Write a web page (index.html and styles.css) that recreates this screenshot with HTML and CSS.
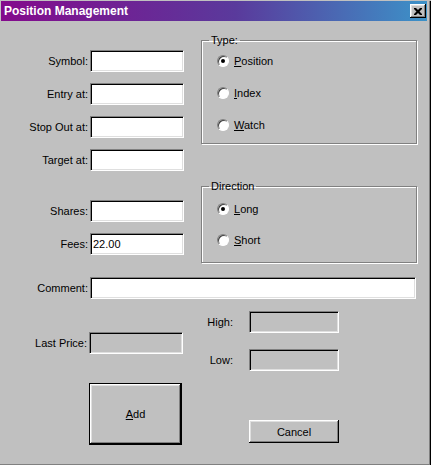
FILE: index.html
```html
<!DOCTYPE html>
<html lang="en">
<head>
    <meta charset="UTF-8">
    <meta name="viewport" content="width=device-width, initial-scale=1.0">
    <title>Position Management</title>
    <link rel="stylesheet" href="styles.css">
</head>
<body>
<div class="window">
    <!-- Title bar -->
    <div class="titlebar">
        <span class="title">Position Management</span>
        <button class="close-btn" aria-label="Close">
            <svg width="8" height="7" viewBox="0 0 8 7">
                <path d="M0 0h2l2 2 2-2h2v1L5.5 3.5 8 6v1H6L4 5 2 7H0V6l2.5-2.5L0 1z" fill="#000"/>
            </svg>
        </button>
    </div>

    <!-- Fields and option groups -->
    <div class="top-section">
        <div class="field-column">
            <div class="field-row"><label>Symbol:</label><input class="text-input" type="text"></div>
            <div class="field-row"><label>Entry at:</label><input class="text-input" type="text"></div>
            <div class="field-row"><label>Stop Out at:</label><input class="text-input" type="text"></div>
            <div class="field-row"><label>Target at:</label><input class="text-input" type="text"></div>
            <div class="field-row spaced"><label>Shares:</label><input class="text-input" type="text"></div>
            <div class="field-row"><label>Fees:</label><input class="text-input" type="text" value="22.00"></div>
        </div>

        <div class="group-column">
            <fieldset class="group type-group">
                <legend>Type:</legend>
                <div class="radio-list">
                    <div class="radio-row"><span class="radio checked"></span><span><u>P</u>osition</span></div>
                    <div class="radio-row"><span class="radio"></span><span><u>I</u>ndex</span></div>
                    <div class="radio-row"><span class="radio"></span><span><u>W</u>atch</span></div>
                </div>
            </fieldset>

            <fieldset class="group direction-group">
                <legend>Direction</legend>
                <div class="radio-list">
                    <div class="radio-row"><span class="radio checked"></span><span><u>L</u>ong</span></div>
                    <div class="radio-row"><span class="radio"></span><span><u>S</u>hort</span></div>
                </div>
            </fieldset>
        </div>
    </div>

    <!-- Comment -->
    <div class="comment-row">
        <label>Comment:</label>
        <input class="text-input comment-input" type="text">
    </div>

    <!-- Prices and buttons -->
    <div class="bottom-section">
        <div class="price-column">
            <div class="field-row last-price"><label>Last Price:</label><input class="text-input" type="text" disabled></div>
            <button class="btn btn-default add-btn"><u>A</u>dd</button>
        </div>
        <div class="range-column">
            <div class="field-row range-row"><label>High:</label><input class="text-input" type="text" disabled></div>
            <div class="field-row range-row low-row"><label>Low:</label><input class="text-input" type="text" disabled></div>
            <button class="btn cancel-btn">Cancel</button>
        </div>
    </div>
</div>
</body>
</html>
```

FILE: styles.css
```css
/* Classic grey dialog */
body {
    margin: 0;
    font-family: "Liberation Sans", Arial, sans-serif;
    font-size: 11px;
    color: #000;
    background-color: #c0c0c0;
}

.window {
    width: 431px;
    height: 465px;
    box-sizing: border-box;
    background-color: #c0c0c0;
    border-right: 1px solid #000;
    border-bottom: 1px solid #000;
    box-shadow: inset -1px -1px #808080;
    padding-right: 2px;
}

/* Title bar with purple to blue gradient */
.titlebar {
    height: 20px;
    margin: 1px 1px 0 1px;
    display: flex;
    align-items: center;
    justify-content: space-between;
    padding: 0 1px 0 3px;
    background: linear-gradient(to right, #840a8c, #5a3a9c 55%, #3c92c8);
}

.title {
    color: #fff;
    font-weight: bold;
    font-size: 12px;
}

.close-btn {
    width: 16px;
    height: 14px;
    padding: 0;
    border: none;
    background-color: #c0c0c0;
    display: flex;
    align-items: center;
    justify-content: center;
    box-shadow: inset -1px -1px #000, inset 1px 1px #fff, inset -2px -2px #808080, inset 2px 2px #dfdfdf;
}

/* Sunken text boxes */
.text-input {
    box-sizing: border-box;
    width: 94px;
    height: 22px;
    margin: 0;
    padding: 0 2px;
    font-family: inherit;
    font-size: 11px;
    color: #000;
    background-color: #fff;
    border: 1px solid;
    border-color: #808080 #fff #fff #808080;
    box-shadow: inset 1px 1px #000, inset -1px -1px #dfdfdf;
    outline: none;
}

.text-input:disabled {
    background-color: #c0c0c0;
}

.field-row {
    display: flex;
    align-items: center;
    gap: 2px;
    margin-top: 11px;
}

.field-row label {
    width: 88px;
    text-align: right;
}

/* Top section: left fields, right option groups */
.top-section {
    display: flex;
    align-items: flex-start;
}

.field-column {
    width: 184px;
    padding-top: 18px;
}

.field-row.spaced {
    margin-top: 29px;
}

.group-column {
    margin-left: 17px;
    width: 216px;
    padding-top: 13px;
}

.group {
    margin: 0;
    padding: 0;
    min-width: 0;
    border: 1px solid #808080;
    box-shadow: inset 1px 1px #fff, 1px 1px #fff;
}

.group legend {
    margin-left: 7px;
    padding: 0 2px;
    line-height: 13px;
}

.radio-list {
    padding-left: 15px;
    display: flex;
    flex-direction: column;
}

.type-group .radio-list {
    padding-top: 6px;
    padding-bottom: 10px;
    gap: 16px;
}

.direction-group {
    margin-top: 36px;
}

.direction-group .radio-list {
    padding-top: 8px;
    padding-bottom: 14px;
    gap: 15px;
}

.radio-row {
    height: 16px;
    display: flex;
    align-items: center;
    gap: 5px;
}

.radio {
    position: relative;
    width: 12px;
    height: 12px;
    box-sizing: border-box;
    border-radius: 50%;
    background-color: #fff;
    border: 1px solid;
    border-color: #808080 #fff #fff #808080;
    box-shadow: inset 1px 1px #404040;
}

.radio.checked::after {
    content: "";
    position: absolute;
    left: 3px;
    top: 3px;
    width: 4px;
    height: 4px;
    border-radius: 50%;
    background-color: #000;
}

/* Comment line */
.comment-row {
    display: flex;
    align-items: center;
    gap: 2px;
    margin-top: 14px;
}

.comment-row label {
    width: 88px;
    text-align: right;
}

.comment-input {
    width: 326px;
}

/* Bottom section: price boxes and buttons */
.bottom-section {
    display: flex;
    align-items: flex-start;
}

.price-column {
    width: 183px;
    padding-top: 33px;
}

.last-price {
    margin-top: 0;
}

.last-price label {
    width: 87px;
}

.range-column {
    margin-left: 9px;
    padding-top: 12px;
}

.range-row {
    margin-top: 0;
    gap: 16px;
}

.range-row label {
    width: 41px;
}

.range-row .text-input {
    width: 90px;
}

.low-row {
    margin-top: 16px;
}

.btn {
    display: block;
    box-sizing: border-box;
    padding: 0;
    font-family: inherit;
    font-size: 11px;
    color: #000;
    background-color: #c0c0c0;
    border: none;
    box-shadow: inset -1px -1px #000, inset 1px 1px #fff, inset -2px -2px #808080, inset 2px 2px #dfdfdf;
}

.btn-default {
    border: 1px solid #000;
}

.add-btn {
    width: 93px;
    height: 62px;
    margin: 29px 0 0 89px;
}

.cancel-btn {
    width: 90px;
    height: 23px;
    margin: 49px 0 0 57px;
}
```
